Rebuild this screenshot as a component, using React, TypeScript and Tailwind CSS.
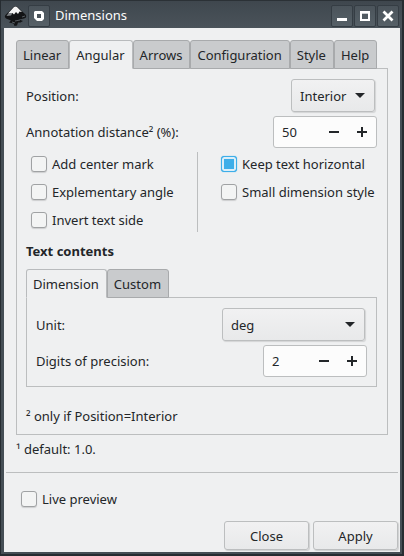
import { useId, useState, type ReactNode } from "react";

function TabBar({ tabs, active, onSelect }: { tabs: string[]; active: string; onSelect: (t: string) => void }) {
  return (
    <div role="tablist" className="relative -mb-px flex">
      {tabs.map((t) => (
        <button
          key={t}
          type="button"
          role="tab"
          aria-selected={t === active}
          onClick={() => onSelect(t)}
          className={
            "h-[29px] rounded-t-[3px] border pr-[7px] pl-1.5 leading-5 " +
            (t === active
              ? "border-[#b9bbbd] border-b-[#eff0f1] bg-[#eff0f1]"
              : "border-[#a8aaac] bg-[#c9cbcd]")
          }
        >
          {t}
        </button>
      ))}
    </div>
  );
}

function SelectBox({ id, options, className }: { id: string; options: string[]; className: string }) {
  return (
    <div className={"relative " + className}>
      <select
        id={id}
        className="h-[33px] w-full appearance-none rounded-[3px] border border-[#bcbebf] bg-linear-to-b from-[#f1f1f2] to-[#e8e9ea] pl-2 text-[#232629] shadow-[1px_1px_1px_#d3d4d5]"
      >
        {options.map((o) => (
          <option key={o}>{o}</option>
        ))}
      </select>
      <svg viewBox="0 0 10 5" className="pointer-events-none absolute top-3.5 right-2.5 h-[5px] w-2.5" aria-hidden="true">
        <path d="M0 0h10L5 5z" fill="#232629" />
      </svg>
    </div>
  );
}

function SpinBox({ id, initial }: { id: string; initial: number }) {
  const [value, setValue] = useState(initial);
  return (
    <div className="flex h-8 w-[104px] rounded-[3px] border border-[#bcbebf] bg-[#fcfcfc]">
      <input
        id={id}
        value={value}
        onChange={(e) => setValue(Number(e.target.value) || 0)}
        className="w-0 min-w-0 flex-1 bg-transparent pl-2 outline-none"
      />
      <button type="button" aria-label="Decrease" onClick={() => setValue(value - 1)} className="flex w-7 items-center justify-center">
        <svg viewBox="0 0 10 10" className="size-2.5" shapeRendering="crispEdges">
          <path d="M0 4h10v2H0z" fill="#232629" />
        </svg>
      </button>
      <button type="button" aria-label="Increase" onClick={() => setValue(value + 1)} className="flex w-7 items-center justify-center">
        <svg viewBox="0 0 10 10" className="size-2.5" shapeRendering="crispEdges">
          <path d="M0 4h4V0h2v4h4v2H6v4H4V6H0z" fill="#232629" />
        </svg>
      </button>
    </div>
  );
}

function Check({ label, checked = false }: { label: string; checked?: boolean }) {
  const id = useId();
  return (
    <div className="flex h-7 items-center gap-[5px] pl-[5px]">
      <input
        id={id}
        type="checkbox"
        defaultChecked={checked}
        className="size-4 shrink-0 appearance-none rounded-[3px] border border-[#a0a2a4] bg-[#f3f4f4] shadow-[0_1px_1px_#cdcecf] checked:border-[#3daee9] checked:bg-[#3daee9] checked:shadow-[inset_0_0_0_2px_#dceef8,0_0_1px_#3daee9]"
      />
      <label htmlFor={id} className="whitespace-nowrap">{label}</label>
    </div>
  );
}

function TitleButton({ label, children }: { label: string; children: ReactNode }) {
  return (
    <button
      type="button"
      aria-label={label}
      className="flex size-[22px] items-center justify-center rounded-[2px] border border-[#353d44] bg-linear-to-b from-[#4b545b] to-[#566067]"
    >
      {children}
    </button>
  );
}

function TitleBar() {
  return (
    <header className="flex h-7 items-center gap-px border-t border-[#2b3136] bg-linear-to-b from-[#3f474e] to-[#4a535a] pt-0.5 pr-[3px] pl-[3px] text-[#fcfcfc]">
      <svg viewBox="0 0 23 22" className="h-[22px] w-[23px]" aria-hidden="true">
        <path d="M9.500 2Q11.500 0 13.500 2L21.500 9.500Q23.500 12.500 20 13.500L15 14.500L19 16L16.500 17.500L14 17.500L13 20.500L10.500 21L9.500 18.500L5 17.500L7 15.500L2 13.500Q0 12 1.500 10Z" fill="#131416" />
        <path d="M9.500 2.500Q11.500 .500 13.500 2.500L18 7L15.500 6.500L14 9L12 7L10 9.500L8.500 8L4.500 8Z" fill="#f4f4f4" />
        <path d="M4.500 8L8.500 8L7 10.500L2.500 11Z" fill="#7d8185" />
        <path d="M11 16l5-1M8 17l3 1M18 12l3-1" stroke="#555b60" />
      </svg>
      <TitleButton label="Window menu">
        <svg viewBox="0 0 12 12" className="size-3" aria-hidden="true">
          <path d="M2 1h7l2 2v6l-2 2H4L1 8V2z" fill="#fff" />
          <path d="M4 4h4v4H4z" fill="#4b545b" />
        </svg>
      </TitleButton>
      <h1 className="flex-1 pb-px pl-1 leading-5">Dimensions</h1>
      <TitleButton label="Minimize">
        <svg viewBox="0 0 12 12" className="size-3" aria-hidden="true">
          <path d="M1 8h10v3H1z" fill="#fff" />
        </svg>
      </TitleButton>
      <TitleButton label="Maximize">
        <svg viewBox="0 0 12 12" className="size-3" aria-hidden="true">
          <path d="M2 2h8v8H2z" fill="none" stroke="#fff" strokeWidth="2" />
          <path d="M3 3h6v1H3z" fill="#c9cccf" />
        </svg>
      </TitleButton>
      <TitleButton label="Close window">
        <svg viewBox="0 0 12 12" className="size-3" aria-hidden="true">
          <path d="M1.500 1.500l9 9M10.500 1.500l-9 9" stroke="#fff" strokeWidth="2.800" />
        </svg>
      </TitleButton>
    </header>
  );
}

function ActionButton({ children }: { children: ReactNode }) {
  return (
    <button
      type="button"
      className="h-[29px] w-[85px] rounded-[3px] border border-[#bcbebf] bg-linear-to-b from-[#f1f1f2] to-[#e8e9ea] shadow-[1px_1px_1px_#cfd0d1]"
    >
      {children}
    </button>
  );
}

export default function App() {
  const [tab, setTab] = useState("Angular");
  const [subTab, setSubTab] = useState("Dimension");
  return (
    <div className="flex min-h-screen flex-col border-r-2 border-b-2 border-l border-[#262c31] bg-[#262c31] font-['Noto_Sans','Open_Sans',sans-serif] text-[13px] leading-5 text-[#232629]">
      <TitleBar />
      <main className="flex flex-1 flex-col border-r-2 border-b-2 border-l-3 border-[#454e55] bg-[#eff0f1]">
        <div className="pt-3 pr-3 pl-3">
          <TabBar tabs={["Linear", "Angular", "Arrows", "Configuration", "Style", "Help"]} active={tab} onSelect={setTab} />
          <section role="tabpanel" className="border border-[#bcbebf] pt-2.5 pr-2.5 pb-2 pl-[9px]">
            <div className="flex items-center justify-between">
              <label htmlFor="position">Position:</label>
              <SelectBox id="position" options={["Interior", "Exterior"]} className="mr-0.5 w-[84px]" />
            </div>
            <div className="mt-1 flex items-center justify-between">
              <label htmlFor="distance">Annotation distance² (%):</label>
              <SpinBox id="distance" initial={50} />
            </div>
            <div className="mt-0.5 flex">
              <div className="flex-1">
                <Check label="Add center mark" />
                <Check label="Explementary angle" />
                <Check label="Invert text side" />
              </div>
              <div className="my-0.5 w-px bg-[#bcbebf]" />
              <div className="w-[179px] pl-[18px]">
                <Check label="Keep text horizontal" checked />
                <Check label="Small dimension style" />
              </div>
            </div>
            <h2 className="mt-[7px] mb-2 font-bold">Text contents</h2>
            <TabBar tabs={["Dimension", "Custom"]} active={subTab} onSelect={setSubTab} />
            <section role="tabpanel" className="border border-[#bcbebf] pt-2.5 pr-[9px] pb-[9px] pl-[9px]">
              <div className="flex items-center justify-between">
                <label htmlFor="unit">Unit:</label>
                <SelectBox id="unit" options={["deg", "rad"]} className="mr-0.5 w-[143px]" />
              </div>
              <div className="mt-1 flex items-center justify-between">
                <label htmlFor="digits">Digits of precision:</label>
                <SpinBox id="digits" initial={2} />
              </div>
            </section>
            <p className="mt-[19px]">² only if Position=Interior</p>
          </section>
          <p className="mt-1">¹ default: 1.0.</p>
        </div>
        <hr className="mx-0.5 mt-[13px] mb-3 border-[#bcbebf]" />
        <div className="pl-3">
          <Check label="Live preview" />
        </div>
        <footer className="mt-auto flex justify-end gap-1 pr-0.5 pb-0.5">
          <ActionButton>Close</ActionButton>
          <ActionButton>Apply</ActionButton>
        </footer>
      </main>
    </div>
  );
}
